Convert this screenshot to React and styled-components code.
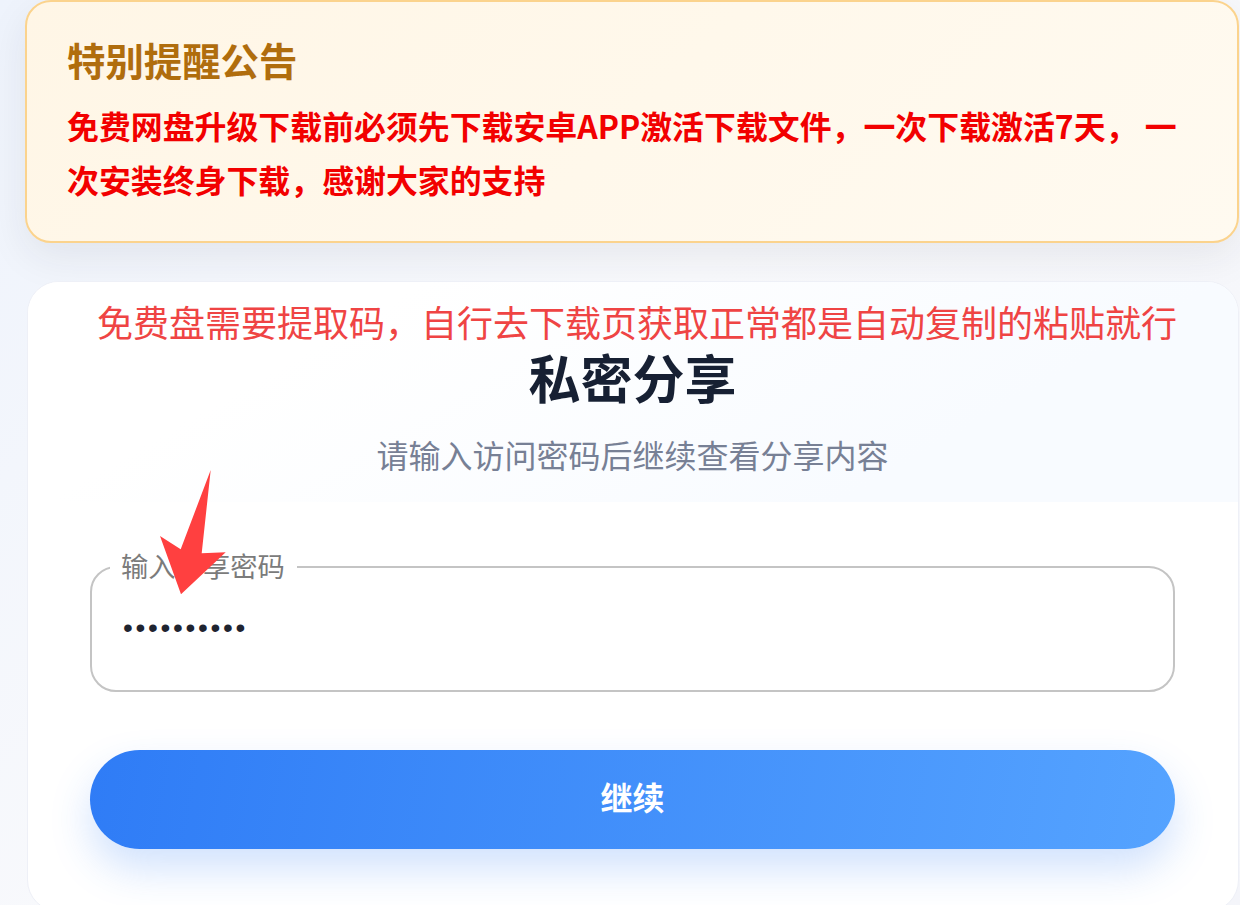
import React from "react";
import styled, { createGlobalStyle } from "styled-components";

const Global = createGlobalStyle`
  html, body { margin: 0; padding: 0; height: 905px; overflow: hidden; }
  body {
    background: linear-gradient(135deg, #eef3fc 0%, #f8f9fc 45%, #f4f5fa 100%);
    font-family: "Noto Sans CJK SC", "Noto Sans", sans-serif;
  }
  * { box-sizing: border-box; }
`;

const Page = styled.main`
  position: relative;
  width: 1240px;
  height: 905px;
  overflow: hidden;
  padding: 0 1px 0 25px;
`;

const Notice = styled.section`
  height: 243px;
  padding: 32px 38px 0 40px;
  border: 2px solid #fbd38d;
  border-radius: 26px;
  background: linear-gradient(135deg, #fff6e6 0%, #fffaf0 100%);
  box-shadow: 0 14px 40px rgba(40, 40, 50, 0.08);
`;

const NoticeTitle = styled.h2`
  margin: 0 0 14px;
  font-size: 38.4px;
  line-height: 50px;
  font-weight: 700;
  color: #b06d0d;
`;

const NoticeBody = styled.p`
  margin: 0;
  font-size: 31.9px;
  line-height: 54px;
  font-weight: 700;
  color: #f20000;
`;

const Card = styled.section`
  position: relative;
  margin: 38px 0 0 2px;
  height: 631px;
  padding: 0 63px 0 62px;
  border: 1px solid #eef0f7;
  border-radius: 32px;
  background: #fff;
  overflow: hidden;
`;

const CardWash = styled.div`
  position: absolute;
  inset: 0 0 auto 0;
  height: 220px;
  background: linear-gradient(150deg, #ffffff 25%, #f8fbff 75%);
`;

const CardContent = styled.div`
  position: relative;
`;

const Hint = styled.p`
  margin: 17px 0 0;
  padding-left: 7px;
  font-size: 36px;
  line-height: 44px;
  text-align: center;
  white-space: nowrap;
  color: #ef4444;
`;

const Title = styled.h1`
  margin: 0;
  font-size: 52px;
  line-height: 68px;
  font-weight: 700;
  text-align: center;
  color: #172033;
`;

const Subtitle = styled.p`
  margin: 18px 0 0;
  font-size: 32px;
  line-height: 50px;
  text-align: center;
  color: #778095;
`;

const Field = styled.fieldset`
  margin: 68px 0 0;
  padding: 0 0 0 18px;
  height: 145px;
  border: 2px solid #c4c4c4;
  border-radius: 26px;
`;

const Legend = styled.legend`
  padding: 0 12px 4px 11px;
  font-size: 27.3px;
  line-height: 36px;
  color: #7b7b7b;
`;

const PasswordInput = styled.input`
  display: block;
  width: 100%;
  height: 82px;
  padding: 0 0 0 13px;
  border: 0;
  outline: 0;
  background: transparent;
  font-family: "Liberation Sans", sans-serif;
  font-size: 28px;
  letter-spacing: 2.7px;
  color: #1f2430;
`;

const Submit = styled.button`
  display: block;
  width: 100%;
  height: 99px;
  margin-top: 58px;
  padding: 0 0 8px;
  border: 0;
  border-radius: 50px;
  background: linear-gradient(100deg, #2f7cf6 0%, #55a3ff 100%);
  box-shadow: 0 20px 40px rgba(47, 124, 246, 0.22);
  font-family: inherit;
  font-size: 32px;
  font-weight: 700;
  color: #fff;
`;

const Arrow = styled.svg`
  position: absolute;
  left: 150px;
  top: 460px;
  width: 90px;
  height: 140px;
`;

export default function App() {
  return (
    <Page>
      <Global />
      <Notice>
        <NoticeTitle>特别提醒公告</NoticeTitle>
        <NoticeBody>免费网盘升级下载前必须先下载安卓APP激活下载文件，一次下载激活7天， 一次安装终身下载，感谢大家的支持</NoticeBody>
      </Notice>
      <Card>
        <CardWash />
        <CardContent>
          <Hint>免费盘需要提取码，自行去下载页获取正常都是自动复制的粘贴就行</Hint>
          <Title>私密分享</Title>
          <Subtitle>请输入访问密码后继续查看分享内容</Subtitle>
          <Field>
            <Legend>输入分享密码</Legend>
            <PasswordInput type="password" defaultValue="1234567890" readOnly aria-label="输入分享密码" />
          </Field>
          <Submit type="button">继续</Submit>
        </CardContent>
      </Card>
      <Arrow viewBox="150 460 90 140" aria-hidden="true">
        <polygon points="210.7,470 201.7,553.3 225.7,552.3 181,594.3 160,536 180.7,549.3" fill="#ff4040" />
      </Arrow>
    </Page>
  );
}
